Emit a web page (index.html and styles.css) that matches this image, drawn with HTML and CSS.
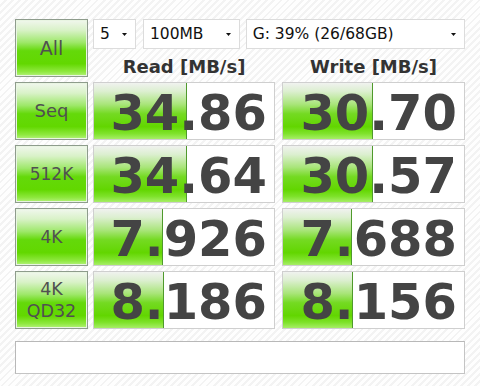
FILE: index.html
```html
<!DOCTYPE html>
<html>
<head>
<meta charset="utf-8">
<link rel="stylesheet" href="styles.css">
</head>
<body>
<div class="app">
  <div class="grid">
    <div class="btn all">All</div>
    <div class="selects">
      <div class="sel s1"><span>5</span><svg class="arr" width="5" height="3" viewBox="0 0 5 3"><path d="M0 0H5L2.5 3Z" fill="#111"/></svg></div>
      <div class="sel s2"><span>100MB</span><svg class="arr" width="5" height="3" viewBox="0 0 5 3"><path d="M0 0H5L2.5 3Z" fill="#111"/></svg></div>
      <div class="sel s3"><span>G: 39% (26/68GB)</span><svg class="arr" width="5" height="3" viewBox="0 0 5 3"><path d="M0 0H5L2.5 3Z" fill="#111"/></svg></div>
    </div>
    <div class="hdr">Read [MB/s]</div>
    <div class="hdr wr">Write [MB/s]</div>

    <div class="btn">Seq</div>
    <div class="val" style="--w:93px">34.86</div>
    <div class="val wr" style="--w:90px">30.70</div>

    <div class="btn small">512K</div>
    <div class="val" style="--w:93px">34.64</div>
    <div class="val wr" style="--w:90px">30.57</div>

    <div class="btn small">4K</div>
    <div class="val" style="--w:69px">7.926</div>
    <div class="val wr" style="--w:69px">7.688</div>

    <div class="btn small two">4K<br>QD32</div>
    <div class="val" style="--w:70px">8.186</div>
    <div class="val wr" style="--w:70px">8.156</div>
  </div>
  <div class="status"></div>
</div>
</body>
</html>
```
FILE: styles.css
```css
html, body {
  margin: 0;
  padding: 0;
}
body {
  width: 480px;
  height: 386px;
  background: repeating-linear-gradient(135deg, #fefefe 0 3px, #f3f3f3 3px 5px);
  font-family: "DejaVu Sans", sans-serif;
  overflow: hidden;
}
.app {
  padding: 19px 15px 0 15px;
}
.grid {
  display: grid;
  grid-template-columns: 78px 189px 183px;
  grid-template-rows: 30px 23px 58px 58px 58px 58px;
  row-gap: 5px;
}
.btn {
  box-sizing: border-box;
  width: 73px;
  height: 58px;
  border: 1px solid #8e9c8c;
  box-shadow: inset 0 0 0 1px #e9f5e2;
  background: linear-gradient(#f1f7ee 0%, #d9f2c8 18%, #9ee86a 40%, #64d90a 55%, #62d800 78%, #8ee83e 92%, #b4f27c 100%);
  color: #505050;
  font-size: 18px;
  display: flex;
  align-items: center;
  justify-content: center;
  text-align: center;
  line-height: 22px;
}
.btn.all {
  grid-row: 1 / 3;
  font-size: 19px;
}
.btn.small {
  font-size: 17px;
}
.btn.two {
  font-size: 17.5px;
}
.selects {
  grid-column: 2 / 4;
  display: flex;
  align-items: stretch;
}
.sel {
  box-sizing: border-box;
  height: 30px;
  background: #fff;
  border: 1px solid #dcdcdc;
  display: flex;
  align-items: center;
  justify-content: space-between;
  padding: 0 8px 0 6px;
  font-size: 15.5px;
  color: #111;
}
.sel .arr {
  display: block;
  margin-top: 1px;
}
.s1 { width: 43px; }
.s2 { width: 97px; margin-left: 7px; }
.s3 { width: 220px; margin-left: 6px; }
.hdr {
  width: 182px;
  text-align: center;
  font-weight: bold;
  font-size: 18px;
  line-height: 23px;
  color: #333;
  padding-top: 1px;
}
.hdr.wr { width: 183px; }
.val {
  box-sizing: border-box;
  width: 182px;
  height: 58px;
  border: 1px solid #cfcfcf;
  background-color: #fff;
  background-image:
    linear-gradient(#4f9a2c, #4f9a2c),
    linear-gradient(#f0f2ef 0%, #dcefd0 15%, #a9e57a 38%, #74da22 55%, #62d600 78%, #7ee22a 90%, #a6ee66 100%);
  background-repeat: no-repeat;
  background-position: calc(var(--w) - 1px) 0, 0 0;
  background-size: 1px 100%, var(--w) 100%;
  display: flex;
  align-items: center;
  justify-content: flex-end;
  padding: 4px 7px 0 0;
  font-weight: bold;
  font-size: 49.5px;
  line-height: 50px;
  color: #444;
}
.val.wr { width: 183px; }
.status {
  margin-top: 12px;
  box-sizing: border-box;
  width: 450px;
  height: 33px;
  background: #fff;
  border: 1px solid #c4c4c4;
  border-top-color: #b8b8b8;
  border-left-color: #b8b8b8;
}
```
